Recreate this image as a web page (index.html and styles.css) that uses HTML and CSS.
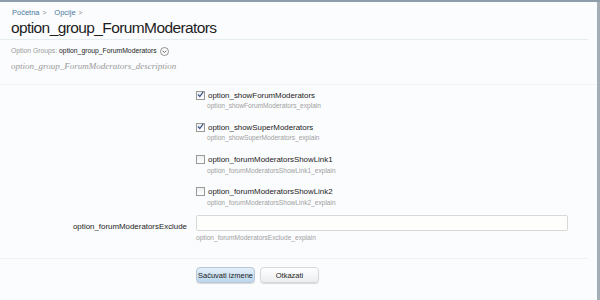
FILE: index.html
```html
<!DOCTYPE html>
<html>
<head>
<meta charset="utf-8">
<link rel="stylesheet" href="styles.css">
</head>
<body>
<div class="frame">
  <div class="head">
    <div class="crumbs"><span>Početna</span><span class="sep">&gt;</span><span>Opcije</span><span class="sep">&gt;</span></div>
    <h1 class="title">option_group_ForumModerators</h1>
  </div>
  <div class="info">
    <div class="groups"><span class="lbl">Option Groups:</span> <span class="val">option_group_ForumModerators</span> <span class="drop"><svg width="9" height="9" viewBox="0 0 9 9"><circle cx="4.5" cy="4.5" r="4" fill="#fff" stroke="#777" stroke-width="0.8"/><path d="M2.6 3.7 L4.5 5.6 L6.4 3.7" fill="none" stroke="#555" stroke-width="0.9"/></svg></span></div>
    <div class="desc">option_group_ForumModerators_description</div>
  </div>
  <div class="form">
    <div class="row check">
      <div class="lcol"></div>
      <div class="rcol">
        <div class="cline"><span class="cb on"><svg width="9" height="9" viewBox="0 0 9 9"><path d="M2 4.5 L3.8 6.5 L7.2 1.8" fill="none" stroke="#3a5a8c" stroke-width="1.2"/></svg></span><span class="clabel">option_showForumModerators</span></div>
        <div class="explain">option_showForumModerators_explain</div>
      </div>
    </div>
    <div class="row check">
      <div class="lcol"></div>
      <div class="rcol">
        <div class="cline"><span class="cb on"><svg width="9" height="9" viewBox="0 0 9 9"><path d="M2 4.5 L3.8 6.5 L7.2 1.8" fill="none" stroke="#3a5a8c" stroke-width="1.2"/></svg></span><span class="clabel">option_showSuperModerators</span></div>
        <div class="explain">option_showSuperModerators_explain</div>
      </div>
    </div>
    <div class="row check">
      <div class="lcol"></div>
      <div class="rcol">
        <div class="cline"><span class="cb"></span><span class="clabel">option_forumModeratorsShowLink1</span></div>
        <div class="explain">option_forumModeratorsShowLink1_explain</div>
      </div>
    </div>
    <div class="row check">
      <div class="lcol"></div>
      <div class="rcol">
        <div class="cline"><span class="cb"></span><span class="clabel">option_forumModeratorsShowLink2</span></div>
        <div class="explain">option_forumModeratorsShowLink2_explain</div>
      </div>
    </div>
    <div class="row text">
      <div class="lcol"><span class="tlabel">option_forumModeratorsExclude</span></div>
      <div class="rcol">
        <div class="input"></div>
        <div class="explain">option_forumModeratorsExclude_explain</div>
      </div>
    </div>
  </div>
  <div class="buttons">
    <div class="lcol"></div>
    <div class="rcol btns">
      <span class="btn primary">Sačuvati izmene</span>
      <span class="btn">Otkazati</span>
    </div>
  </div>
</div>
</body>
</html>
```
FILE: styles.css
```css
html, body {
  margin: 0;
  padding: 0;
}
body {
  background: #fbfcfe;
  border-top: 2px solid #8d9dab;
  font-family: "Liberation Sans", Arial, sans-serif;
  color: #222;
  height: 298px;
  overflow: hidden;
}
.frame {
  width: 597px;
  height: 298px;
  border-right: 3px solid #a4aeb4;
  box-sizing: content-box;
}
.head {
  padding: 6px 0 0 11px;
  width: 577px;
  border-bottom: 1px solid #e5edf0;
  height: 31px;
}
.crumbs {
  font-size: 7.5px;
  color: #4a7aa0;
  line-height: 10px;
  padding-left: 1px;
}
.crumbs .sep {
  color: #888;
  margin: 0 8px 0 3px;
  font-size: 6.5px;
}
.title {
  margin: 0;
  font-weight: normal;
  font-size: 15.5px;
  line-height: 20px;
  letter-spacing: -0.6px;
  color: #1e1e1e;
}
.info {
  padding: 6px 0 0 11px;
  height: 38px;
  border-bottom: 1px solid #eef3f5;
}
.groups {
  font-size: 6.8px;
  line-height: 10px;
  display: flex;
  align-items: center;
  gap: 2px;
}
.groups .lbl { color: #999; }
.groups .val { color: #222; }
.groups .drop { display: inline-flex; margin-left: 1px; }
.desc {
  margin-top: 4px;
  font-family: "Liberation Serif", "Times New Roman", serif;
  font-style: italic;
  font-size: 9px;
  color: #999;
  line-height: 12px;
}
.form {
  padding-top: 2px;
  width: 588px;
  height: 171px;
  border-bottom: 1px solid #edf3f3;
}
.row {
  display: flex;
}
.lcol {
  width: 187px;
  flex: none;
  text-align: right;
}
.rcol {
  margin-left: 9px;
  flex: 1;
}
.row.check {
  height: 32.3px;
  padding-top: 2px;
  box-sizing: border-box;
}
.cline {
  display: flex;
  align-items: center;
  height: 12px;
}
.cb {
  width: 7px;
  height: 7px;
  border: 1px solid #9a9a9a;
  background: linear-gradient(#eee, #fff);
  display: inline-flex;
  align-items: center;
  justify-content: center;
  margin-right: 3px;
  position: relative;
}
.cb svg { position: absolute; left: -1px; top: -2px; }
.clabel {
  font-size: 7.9px;
  color: #222;
}
.explain {
  font-size: 6.6px;
  color: #a0a0a0;
  line-height: 10px;
  margin-left: 11px;
}
.row.text {
  margin-top: -1px;
}
.row.text .explain { margin-left: 0; margin-top: 2px; }
.tlabel {
  font-size: 7.9px;
  line-height: 16px;
  color: #222;
}
.input {
  width: 370px;
  height: 14px;
  border: 1px solid #d8d8d8;
  background: #fefefc;
  border-radius: 2px;
}
.buttons {
  display: flex;
  padding-top: 8px;
}
.btns {
  display: flex;
  gap: 5px;
}
.btn {
  display: inline-flex;
  align-items: center;
  justify-content: center;
  height: 14px;
  width: 57px;
  font-size: 7.5px;
  color: #222;
  border: 1px solid #d6d9dc;
  border-radius: 4px;
  background: linear-gradient(#fff, #eceef0);
  box-shadow: 0 1px 1px rgba(0,0,0,0.15);
}
.btn.primary {
  background: linear-gradient(#e4f0fa, #bcd6ec);
  border-color: #b8c8d6;
}
```
